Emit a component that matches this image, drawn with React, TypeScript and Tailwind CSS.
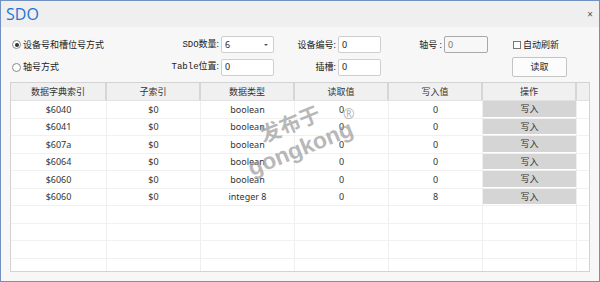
import React from "react";

const cols = [96, 94, 94, 94, 94, 94];
const rows = [
  ["$6040", "$0", "boolean", "0", "0"],
  ["$6041", "$0", "boolean", "0", "0"],
  ["$607a", "$0", "boolean", "0", "0"],
  ["$6064", "$0", "boolean", "0", "0"],
  ["$6060", "$0", "boolean", "0", "0"],
  ["$6060", "$0", "integer 8", "0", "8"],
];
const headers = ["数据字典索引", "子索引", "数据类型", "读取值", "写入值", "操作"];

const font = { fontFamily: '"Noto Sans", "Noto Sans CJK SC", sans-serif' };

function Radio({ checked, label }: { checked?: boolean; label: string }) {
  return (
    <div className="flex items-center gap-[2px] text-[9px] text-[#222]">
      <span className="w-[9px] h-[9px] rounded-full border border-[#8a8a8a] bg-white flex items-center justify-center">
        {checked && <span className="w-[4px] h-[4px] rounded-full bg-[#333]" />}
      </span>
      <span>{label}</span>
    </div>
  );
}

function Input({ value, w, disabled, select }: { value: string; w: number; disabled?: boolean; select?: boolean }) {
  return (
    <div
      className={
        "h-[17px] rounded-[2px] border flex items-center justify-between pl-[3px] pr-[5px] text-[9px] " +
        (disabled ? "border-[#a8a8a8] bg-[#f7f7f7] text-[#777]" : "border-[#cfcfcf] bg-white text-[#222]")
      }
      style={{ width: w }}
    >
      <span>{value}</span>
      {select && <span className="w-0 h-0 border-l-[2px] border-r-[2px] border-t-[2px] border-l-transparent border-r-transparent border-t-[#555]" />}
    </div>
  );
}

function Label({ children }: { children: React.ReactNode }) {
  return <span className="text-[9px] text-[#222] mr-[2px]">{children}</span>;
}

export default function App() {
  const allRows = [...rows, ...Array.from({ length: 5 }, () => null)];
  return (
    <div className="w-[600px] h-[282px] border border-[#7390c2] bg-[#f7f7f7] flex flex-col overflow-hidden relative" style={font}>
      <div className="h-[26px] bg-[#efefef] flex items-center justify-between pl-[5px] pr-[6px] shrink-0">
        <span className="text-[16px] leading-none text-[#2274d2]" style={{ fontFamily: '"Open Sans", "Noto Sans", sans-serif' }}>SDO</span>
        <span className="text-[10px] text-[#555] leading-none">×</span>
      </div>

      <div className="flex items-center h-[17px] mt-[9px] pl-[10px]">
        <div className="w-[150px] pl-[1px]"><Radio checked label="设备号和槽位号方式" /></div>
        <div className="w-[113px] flex items-center justify-end"><Label><span style={{ fontFamily: '"Liberation Mono", monospace' }}>SDO</span>数量:</Label><Input value="6" w={53} select /></div>
        <div className="w-[107px] flex items-center justify-end"><Label>设备编号:</Label><Input value="0" w={43} /></div>
        <div className="w-[107px] flex items-center justify-end"><Label>轴号 :</Label><Input value="0" w={44} disabled /></div>
        <div className="pl-[25px] flex items-center gap-[2px] text-[9px] text-[#222]">
          <span className="w-[8px] h-[8px] border border-[#777] bg-white" />
          <span>自动刷新</span>
        </div>
      </div>

      <div className="flex items-center h-[20px] mt-[4px] pl-[10px]">
        <div className="w-[150px] pl-[1px]"><Radio label="轴号方式" /></div>
        <div className="w-[113px] flex items-center justify-end"><Label><span style={{ fontFamily: '"Liberation Mono", monospace' }}>Table</span>位置:</Label><Input value="0" w={53} /></div>
        <div className="w-[107px] flex items-center justify-end"><Label>插槽:</Label><Input value="0" w={43} /></div>
        <div className="w-[107px]" />
        <div className="pl-[24px]">
          <div className="w-[55px] h-[20px] rounded-[2px] border border-[#c4c4c4] bg-[#fcfcfc] flex items-center justify-center text-[9px] text-[#222]">读取</div>
        </div>
      </div>

      <div className="ml-[9px] mt-[5px] w-[580px] h-[190px] border border-[#d3d3d3] bg-white overflow-hidden flex flex-col">
        <div className="flex h-[18px] bg-[#f0f0f0] border-b border-[#e2e2e2] shrink-0">
          {headers.map((h, i) => (
            <div key={i} className="h-full flex items-center justify-center text-[9px] text-[#333] border-r-2 border-[#d6d6d6]" style={{ width: cols[i] }}>
              {h}
            </div>
          ))}
          <div className="flex-1" />
        </div>
        {allRows.map((r, ri) => (
          <div key={ri} className="flex h-[17.5px] shrink-0 border-b border-[#f1f1f1]">
            {cols.map((w, ci) => (
              <div key={ci} className="h-full flex items-center justify-center text-[9px] text-[#333] border-r border-[#efefef]" style={{ width: w }}>
                {r && ci < 5 && r[ci]}
                {r && ci === 5 && (
                  <div className="w-full h-full bg-[#d5d5d5] border-b border-white flex items-center justify-center">写入</div>
                )}
              </div>
            ))}
            <div className="flex-1" />
          </div>
        ))}
      </div>

      <div className="absolute left-[240px] top-[104px] w-[120px] h-[70px] pointer-events-none select-none">
        <div className="absolute left-[17px] top-[8px] rotate-[-22deg] text-[21px] font-bold text-[#999999]/70 leading-none" style={{ fontFamily: '"Noto Sans CJK SC", sans-serif' }}>发布于</div>
        <div className="absolute left-[4px] top-[32px] rotate-[-22deg] text-[23px] font-bold text-[#999999]/70 leading-none" style={{ fontFamily: '"Liberation Sans", sans-serif' }}>gongkong</div>
        <div className="absolute left-[102px] top-[2px] text-[14px] text-[#999999]/70 leading-none">®</div>
      </div>
    </div>
  );
}
